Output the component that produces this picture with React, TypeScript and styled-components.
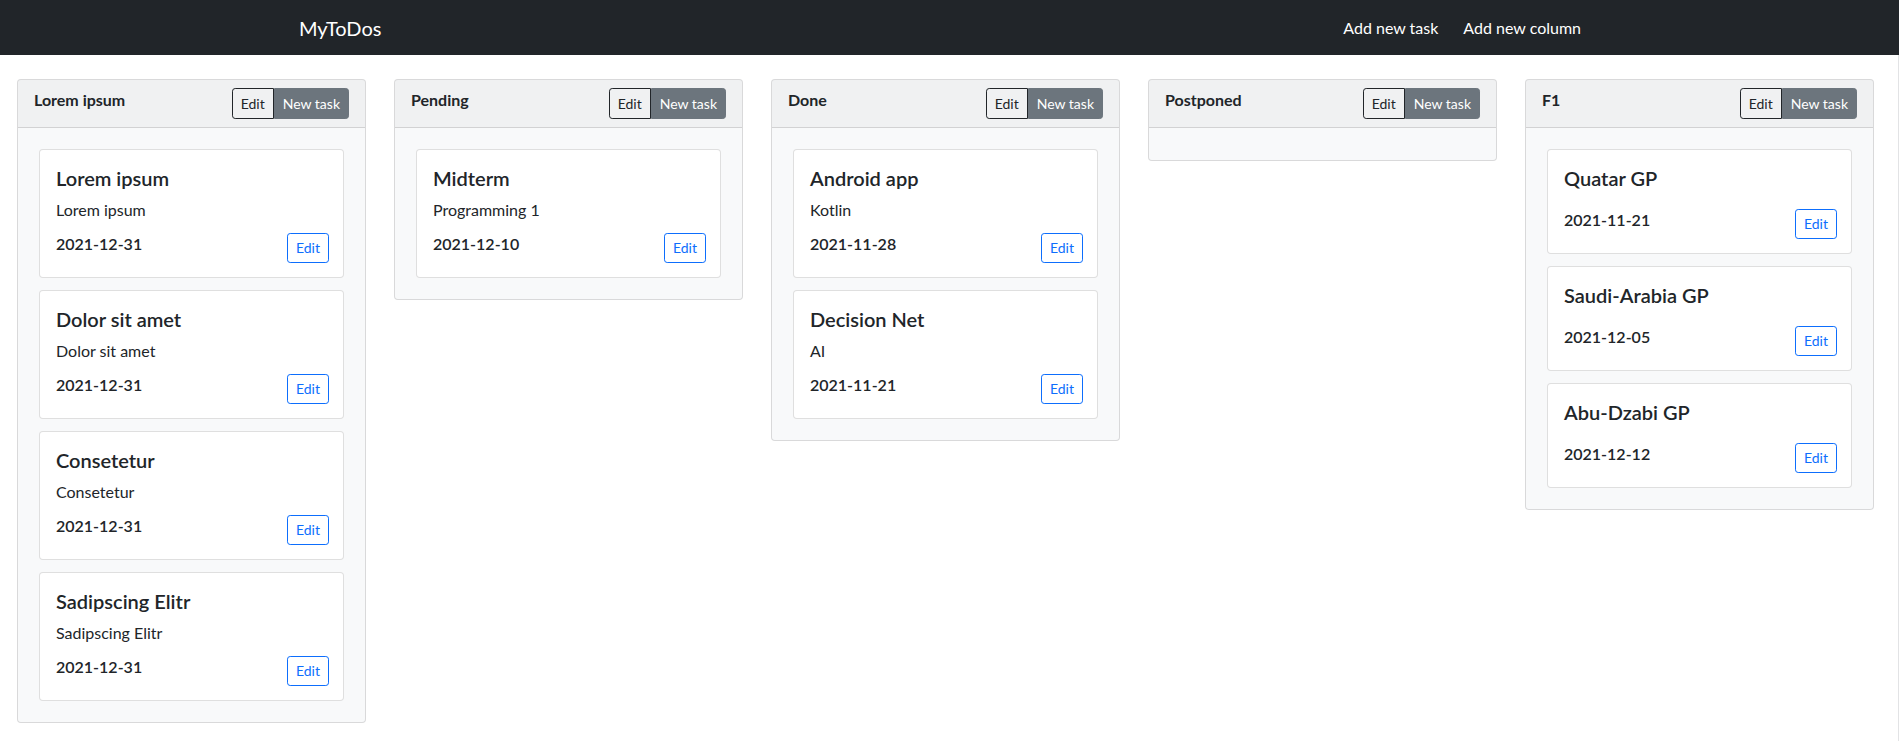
import React from "react";
import styled, { createGlobalStyle, css } from "styled-components";

const GlobalStyle = createGlobalStyle`
  * {
    box-sizing: border-box;
  }

  body {
    margin: 0;
    font-family: Lato, "Open Sans", Arial, sans-serif;
    font-size: 16px;
    color: #212529;
    background-color: #fff;
  }
`;

const Navbar = styled.nav`
  display: flex;
  align-items: center;
  height: 55px;
  background-color: #212529;
`;

const NavInner = styled.div`
  display: flex;
  align-items: center;
  justify-content: space-between;
  width: 1301px;
  margin: 0 auto;
  padding-right: 19px;
`;

const Brand = styled.a`
  font-size: 20px;
  line-height: 30px;
  color: #fff;
  text-decoration: none;
`;

const NavLinks = styled.div`
  display: flex;
  gap: 25px;
`;

const NavLink = styled.a`
  font-size: 16px;
  line-height: 24px;
  color: #fff;
  text-decoration: none;
  cursor: pointer;
`;

const Board = styled.main`
  display: flex;
  align-items: flex-start;
  gap: 28px;
  padding: 24px 17px;
  border-right: 1px solid #e2e3e5;
`;

const Column = styled.section`
  flex: none;
  width: 349px;
  border: 1px solid rgba(0, 0, 0, 0.125);
  border-radius: 4px;
  background-color: #f8f9fa;
  overflow: hidden;
`;

const ColumnHeader = styled.header`
  display: flex;
  justify-content: space-between;
  align-items: flex-start;
  padding: 8px 16px;
  background-color: rgba(0, 0, 0, 0.03);
  border-bottom: 1px solid rgba(0, 0, 0, 0.125);
`;

const ColumnTitle = styled.strong`
  font-size: 16px;
  line-height: 24px;
  font-weight: 700;
`;

const ButtonGroup = styled.div`
  display: flex;
`;

const GroupButton = styled.button<{ $variant: "outline" | "secondary" }>`
  font-family: inherit;
  font-size: 14px;
  line-height: 21px;
  padding: 4px 8px;
  border: 1px solid;
  cursor: pointer;

  ${(props) =>
    props.$variant === "outline"
      ? css`
          color: #212529;
          border-color: #212529;
          background-color: transparent;
          border-radius: 3.2px 0 0 3.2px;
        `
      : css`
          color: #fff;
          border-color: #6c757d;
          background-color: #6c757d;
          border-radius: 0 3.2px 3.2px 0;
        `}
`;

const ColumnBody = styled.div`
  display: flex;
  flex-direction: column;
  gap: 2px;
  padding: 16px;
`;

const TaskCard = styled.article`
  display: flex;
  flex-direction: column;
  margin: 5px;
  padding: 16px 16px 14px;
  background-color: #fff;
  border: 1px solid rgba(0, 0, 0, 0.125);
  border-radius: 4px;
`;

const TaskTitle = styled.h5`
  margin: 0 0 8px;
  font-size: 20px;
  line-height: 24px;
  font-weight: 600;
`;

const TaskText = styled.p`
  margin: 0;
  font-size: 16px;
  line-height: 24px;
`;

const TaskFooter = styled.div`
  display: flex;
  justify-content: space-between;
  align-items: flex-start;
  margin-top: 10px;
`;

const TaskDate = styled.span`
  font-size: 16px;
  line-height: 24px;
  font-weight: 600;
`;

const EditButton = styled.button`
  margin-top: 1px;
  margin-right: -2px;
  font-family: inherit;
  font-size: 14px;
  line-height: 20px;
  padding: 4px 8px;
  color: #0d6efd;
  background-color: transparent;
  border: 1px solid #0d6efd;
  border-radius: 3.2px;
  cursor: pointer;
`;

interface ITask {
  title: string;
  text?: string;
  date: string;
}

interface IColumn {
  title: string;
  tasks: ITask[];
}

const columns: IColumn[] = [
  {
    title: "Lorem ipsum",
    tasks: [
      { title: "Lorem ipsum", text: "Lorem ipsum", date: "2021-12-31" },
      { title: "Dolor sit amet", text: "Dolor sit amet", date: "2021-12-31" },
      { title: "Consetetur", text: "Consetetur", date: "2021-12-31" },
      { title: "Sadipscing Elitr", text: "Sadipscing Elitr", date: "2021-12-31" },
    ],
  },
  {
    title: "Pending",
    tasks: [{ title: "Midterm", text: "Programming 1", date: "2021-12-10" }],
  },
  {
    title: "Done",
    tasks: [
      { title: "Android app", text: "Kotlin", date: "2021-11-28" },
      { title: "Decision Net", text: "AI", date: "2021-11-21" },
    ],
  },
  { title: "Postponed", tasks: [] },
  {
    title: "F1",
    tasks: [
      { title: "Quatar GP", date: "2021-11-21" },
      { title: "Saudi-Arabia GP", date: "2021-12-05" },
      { title: "Abu-Dzabi GP", date: "2021-12-12" },
    ],
  },
];

const App = () => {
  return (
    <>
      <GlobalStyle />
      <Navbar>
        <NavInner>
          <Brand>MyToDos</Brand>
          <NavLinks>
            <NavLink>Add new task</NavLink>
            <NavLink>Add new column</NavLink>
          </NavLinks>
        </NavInner>
      </Navbar>
      <Board>
        {columns.map((column) => (
          <Column key={column.title}>
            <ColumnHeader>
              <ColumnTitle>{column.title}</ColumnTitle>
              <ButtonGroup>
                <GroupButton $variant="outline">Edit</GroupButton>
                <GroupButton $variant="secondary">New task</GroupButton>
              </ButtonGroup>
            </ColumnHeader>
            <ColumnBody>
              {column.tasks.map((task, index) => (
                <TaskCard key={index}>
                  <TaskTitle>{task.title}</TaskTitle>
                  {task.text && <TaskText>{task.text}</TaskText>}
                  <TaskFooter>
                    <TaskDate>{task.date}</TaskDate>
                    <EditButton>Edit</EditButton>
                  </TaskFooter>
                </TaskCard>
              ))}
            </ColumnBody>
          </Column>
        ))}
      </Board>
    </>
  );
};

export default App;
